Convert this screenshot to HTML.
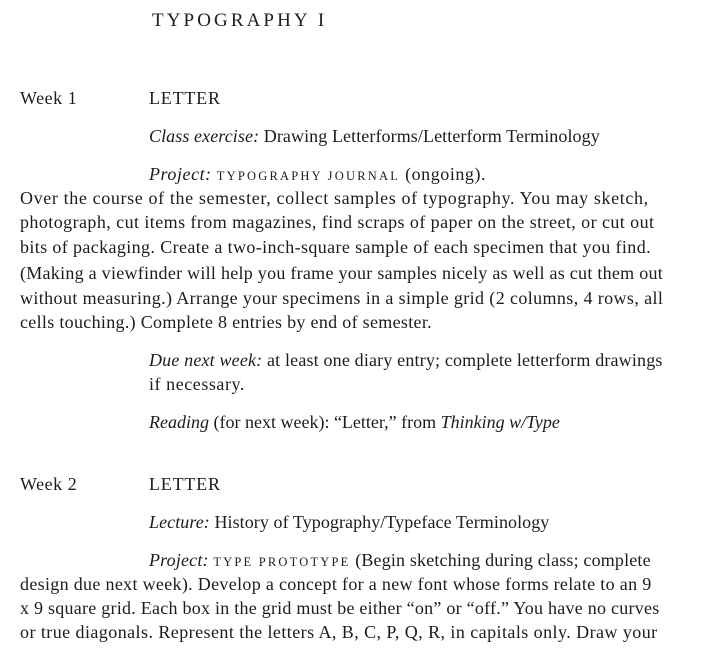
<!DOCTYPE html>
<html><head><meta charset="utf-8"><style>
body{margin:0;background:#fff;width:717px;height:649px;overflow:hidden;position:relative;font-family:"Liberation Serif",serif;font-size:18px;letter-spacing:0.55px;color:#1c1c1c}
.l{position:absolute;white-space:nowrap;line-height:24px}
.sc{font-size:12.5px;letter-spacing:2.2px}
i{font-style:italic}
</style></head><body>
<div class="l" style="left:152px;top:9px;font-size:19px;letter-spacing:3.1px">TYPOGRAPHY I</div>
<div class="l" style="left:20px;top:86px">Week 1</div>
<div class="l" style="left:149px;top:86px;letter-spacing:0.8px">LETTER</div>
<div class="l" style="left:149px;top:124px;letter-spacing:0.09px"><i>Class exercise:</i> Drawing Letterforms/Letterform Terminology</div>
<div class="l" style="left:149px;top:162px"><i>Project:</i> <span class="sc">TYPOGRAPHY JOURNAL</span> (ongoing).</div>
<div class="l" style="left:20px;top:186px;letter-spacing:0.63px">Over the course of the semester, collect samples of typography. You may sketch,</div>
<div class="l" style="left:20px;top:210px;letter-spacing:0.43px">photograph, cut items from magazines, find scraps of paper on the street, or cut out</div>
<div class="l" style="left:20px;top:235px;letter-spacing:0.38px">bits of packaging. Create a two-inch-square sample of each specimen that you find.</div>
<div class="l" style="left:20px;top:261px;letter-spacing:0.27px">(Making a viewfinder will help you frame your samples nicely as well as cut them out</div>
<div class="l" style="left:20px;top:286px;letter-spacing:0.39px">without measuring.) Arrange your specimens in a simple grid (2 columns, 4 rows, all</div>
<div class="l" style="left:20px;top:310px;letter-spacing:0.31px">cells touching.) Complete 8 entries by end of semester.</div>
<div class="l" style="left:149px;top:348px;letter-spacing:0.17px"><i>Due next week:</i> at least one diary entry; complete letterform drawings</div>
<div class="l" style="left:149px;top:372px">if necessary.</div>
<div class="l" style="left:149px;top:410px;letter-spacing:0px"><i>Reading</i> (for next week): “Letter,” from <i>Thinking w/Type</i></div>
<div class="l" style="left:20px;top:472px">Week 2</div>
<div class="l" style="left:149px;top:472px;letter-spacing:0.8px">LETTER</div>
<div class="l" style="left:149px;top:510px;letter-spacing:0.07px"><i>Lecture:</i> History of Typography/Typeface Terminology</div>
<div class="l" style="left:149px;top:548px;letter-spacing:0.17px"><i>Project:</i> <span class="sc">TYPE PROTOTYPE</span> (Begin sketching during class; complete</div>
<div class="l" style="left:20px;top:572px;letter-spacing:0.32px">design due next week). Develop a concept for a new font whose forms relate to an 9</div>
<div class="l" style="left:20px;top:596px;letter-spacing:0.25px">x 9 square grid. Each box in the grid must be either “on” or “off.” You have no curves</div>
<div class="l" style="left:20px;top:620px;letter-spacing:0.44px">or true diagonals. Represent the letters A, B, C, P, Q, R, in capitals only. Draw your</div>
</body></html>
